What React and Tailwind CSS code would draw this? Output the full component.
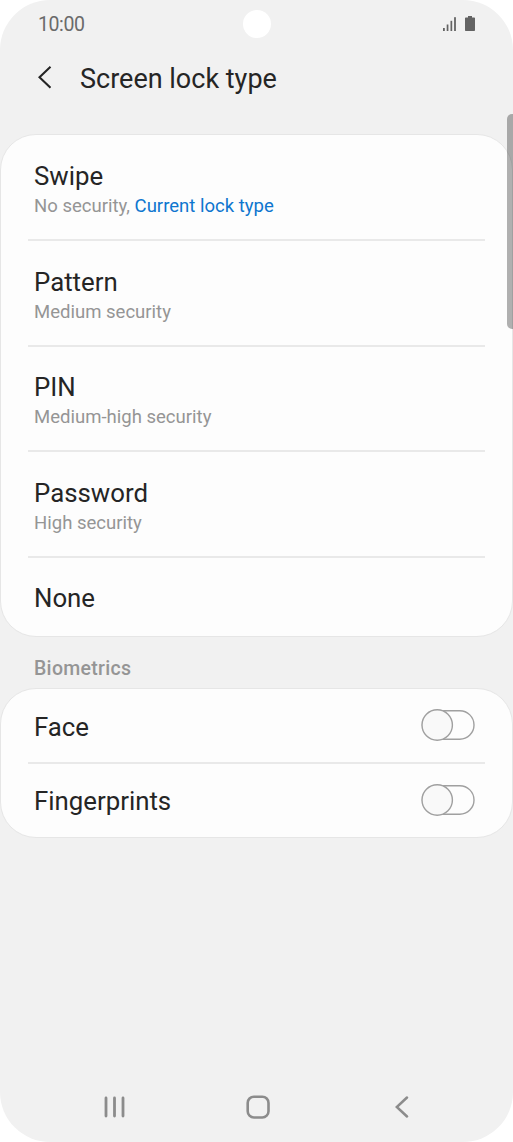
import React from "react";
import { useState } from "react";

const lockTypes = [
  { name: "Swipe", info: "No security, ", current: true },
  { name: "Pattern", info: "Medium security" },
  { name: "PIN", info: "Medium-high security" },
  { name: "Password", info: "High security" },
];

function StatusBar() {
  return (
    <div className="flex h-12 items-center justify-between pl-[38px] pr-[37px]">
      <span className="w-[60px] pt-0.5 text-[19.500px] leading-6 tracking-[-0.4px] text-[#6a6a6a]">10:00</span>
      <div className="mr-px h-[28px] w-[28px] rounded-full bg-white" />
      <div className="flex w-[60px] justify-end">
        <svg width="34" height="16" viewBox="0 0 34 16" fill="#636363">
          <rect x="1" y="12" width="1.8" height="3" />
          <rect x="4.7" y="8.5" width="1.7" height="6.5" />
          <rect x="8.5" y="4.8" width="1.7" height="10.2" />
          <rect x="12.1" y="1.2" width="1.8" height="13.8" />
          <path d="M26 0h4v1.500h2c.6 0 1 .4 1 1V14c0 .6-.4 1-1 1h-8c-.6 0-1-.4-1-1V2.500c0-.6.4-1 1-1h2z" />
        </svg>
      </div>
    </div>
  );
}

function Header() {
  return (
    <div className="flex h-[86px] items-start pl-[38px] pt-[12px]">
      <svg className="mt-[6px]" width="14" height="23" viewBox="0 0 14 23" fill="none" stroke="#252525" strokeWidth="2.1">
        <path d="M12.500 0.800L1.500 11.300L12.500 21.800" />
      </svg>
      <h1 className="ml-[28px] pt-px text-[27px] leading-9 text-[#252525]">Screen lock type</h1>
    </div>
  );
}

function LockRow({ item }) {
  return (
    <div className="ml-[27px] mr-[27px] h-[105.67px] border-b-2 border-[#e9e9e9] pl-[6px] pt-[24.670px]">
      <p className="text-[25.800px] leading-8 text-[#252525]">{item.name}</p>
      <p className="whitespace-pre pt-px text-[18.550px] leading-[26px] text-[#959595]">
        {item.info}
        {item.current && <span className="text-[#0e76cf]">Current lock type</span>}
      </p>
    </div>
  );
}

function Toggle({ on, onClick }) {
  return (
    <button type="button" role="switch" aria-checked={on} onClick={onClick} className="mb-[2px]">
      <svg width="54" height="32" viewBox="0 0 54 32" fill="none" stroke="#a0a0a0" strokeWidth="1.4">
        <rect x="1.500" y="1.700" width="51.500" height="28.500" rx="14.250" />
        <circle cx={on ? 38 : 16.2} cy="16" r="15.200" fill="#f9f9f9" />
      </svg>
    </button>
  );
}

function NavBar() {
  return (
    <div className="mt-auto flex h-[70px] items-center justify-between pl-[104px] pr-[104px]">
      <svg width="22" height="24" viewBox="0 0 22 24" fill="none" stroke="#8c8c8c" strokeWidth="2.800" strokeLinecap="round">
        <path d="M2 3v18M10.500 3v18M19 3v18" />
      </svg>
      <svg className="mr-[6px]" width="24" height="24" viewBox="0 0 24 24" fill="none" stroke="#8c8c8c" strokeWidth="2.600">
        <rect x="1.700" y="1.700" width="20.800" height="20.800" rx="6.200" />
      </svg>
      <svg width="14" height="24" viewBox="0 0 14 24" fill="none" stroke="#8c8c8c" strokeWidth="2.500" strokeLinecap="round">
        <path d="M12 2.500L1.800 12L12 21.500" />
      </svg>
    </div>
  );
}

function App() {
  const [face, setFace] = useState(false);
  const [fingerprints, setFingerprints] = useState(false);

  return (
    <div className="bg-white font-['Roboto',sans-serif]">
      <div className="relative flex h-[1142px] w-[513px] flex-col overflow-hidden rounded-[50px] bg-[#f1f1f1]">
        <StatusBar />
        <Header />

        <div className="h-[503px] rounded-[36px] border border-[#e6e6e6] bg-[#fdfdfd] pt-[0.330px]">
          {lockTypes.map((item) => (
            <LockRow key={item.name} item={item} />
          ))}
          <p className="ml-[33px] pt-[24px] text-[25.800px] leading-8 text-[#252525]">None</p>
        </div>

        <h2 className="h-[51px] pl-[34px] pt-[18px] text-[19.500px] font-medium leading-7 tracking-[0.3px] text-[#959595]">
          Biometrics
        </h2>

        <div className="h-[150px] rounded-[36px] border border-[#e6e6e6] bg-[#fdfdfd] px-[27px]">
          <div className="flex h-[75px] items-center justify-between border-b-2 border-[#e9e9e9] pl-[6px] pr-[10px]">
            <span className="pt-[2px] text-[25.800px] leading-8 text-[#252525]">Face</span>
            <Toggle on={face} onClick={() => setFace(!face)} />
          </div>
          <div className="flex h-[73px] items-center justify-between pl-[6px] pr-[10px]">
            <span className="pt-px text-[25.800px] leading-8 text-[#252525]">Fingerprints</span>
            <Toggle on={fingerprints} onClick={() => setFingerprints(!fingerprints)} />
          </div>
        </div>

        <NavBar />

        {/* scroll thumb */}
        <div className="absolute right-0 top-[114px] h-[215px] w-[6.500px] rounded-l-[5px] bg-black/30" />
      </div>
    </div>
  );
}

export default App;
